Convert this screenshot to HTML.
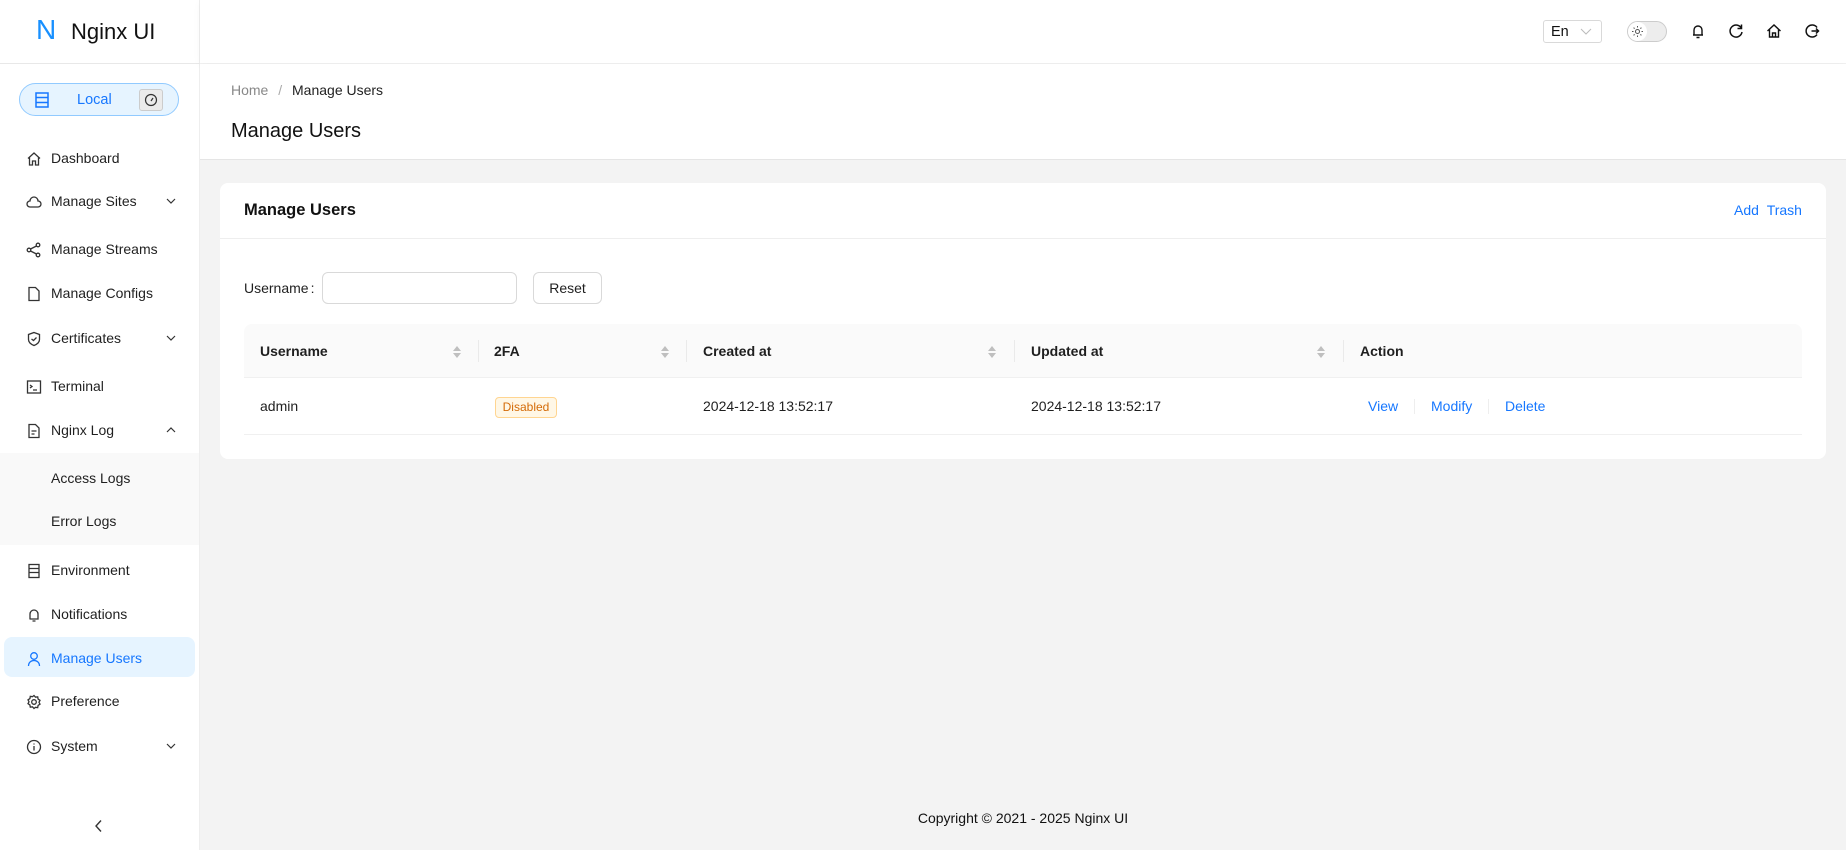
<!DOCTYPE html>
<html><head><meta charset="utf-8"><style>
*{box-sizing:border-box;margin:0;padding:0}
body{width:1846px;height:850px;overflow:hidden;background:#f3f3f3;font-family:"Liberation Sans",sans-serif;color:rgba(0,0,0,.88);font-size:14px;position:relative}
.a{position:absolute}
.side{left:0;top:0;width:200px;height:850px;background:#fff;border-right:1px solid #eee}
.mi{position:absolute;left:0;width:200px;height:40px;line-height:42px;font-size:14px}
.mi svg{position:absolute;left:26px;top:14px}
.mi span{position:absolute;left:51px;top:0;white-space:nowrap}
.blue{color:#1677ff}
.th{position:absolute;top:324px;height:54px;line-height:55px;font-weight:bold;font-size:14px}
.sep{position:absolute;top:340px;width:1px;height:22px;background:#eaeaea}
.sort{position:absolute;top:345px}
.td{position:absolute;top:378px;height:56px;line-height:57px;font-size:14px}
</style></head><body>
<div class="a side">
  <div class="a" style="left:0;top:63px;width:200px;height:1px;background:#e8e8e8"></div>
  <div class="a" style="left:36px;top:14px;font-size:28px;color:#1890ff;font-weight:300">N</div>
  <div class="a" style="left:71px;top:19px;font-size:22px;color:#111">Nginx UI</div>
  <div class="a" style="left:19px;top:83px;width:160px;height:33px;border:1px solid #91caff;border-radius:17px;background:#e6f4ff"></div>
  <svg class="a" style="left:35px;top:92px" width="14" height="16" viewBox="0 0 14 16" fill="none" stroke="#1677ff" stroke-width="1.5"><rect x="1" y="1" width="12" height="14"/><path d="M1 5.5h12M1 10.5h12"/></svg>
  <div class="a blue" style="left:77px;top:92px;font-size:14.5px">Local</div>
  <div class="a" style="left:139px;top:89px;width:24px;height:22px;border:1px solid #ccc;border-radius:3px;background:#ebebeb"></div>
  <svg class="a" style="left:144px;top:93px" width="14" height="14" viewBox="0 0 14 14" fill="none" stroke="#333" stroke-width="1.2"><circle cx="7" cy="7" r="5.5"/><path d="M7 8l2-3"/></svg>

  <div class="mi" style="top:137px"><svg width="16" height="16" viewBox="0 0 16 16" fill="none" stroke="#333" stroke-width="1.3"><path d="M2 7.5L8 2l6 5.5M3.5 6v8h3v-4h3v4h3V6"/></svg><span>Dashboard</span></div>
  <div class="mi" style="top:180px"><svg width="16" height="16" viewBox="0 0 16 16" fill="none" stroke="#333" stroke-width="1.3"><path d="M4 13h8a3 3 0 0 0 0-6 4 4 0 0 0-8 0 3 3 0 0 0 0 6z"/></svg><span>Manage Sites</span><svg style="left:166px;top:17px" width="10" height="8" viewBox="0 0 10 8" fill="none" stroke="#333" stroke-width="1.2"><path d="M1 2l4 4 4-4"/></svg></div>
  <div class="mi" style="top:228px"><svg width="16" height="16" viewBox="0 0 16 16" fill="none" stroke="#333" stroke-width="1.3"><circle cx="3" cy="8" r="1.8"/><circle cx="12" cy="3" r="1.8"/><circle cx="12" cy="13" r="1.8"/><path d="M4.5 7l6-3M4.5 9l6 3"/></svg><span>Manage Streams</span></div>
  <div class="mi" style="top:272px"><svg width="16" height="16" viewBox="0 0 16 16" fill="none" stroke="#333" stroke-width="1.3"><path d="M3 1.5h6.5l3.5 3.5v9.5H3z"/></svg><span>Manage Configs</span></div>
  <div class="mi" style="top:317px"><svg width="16" height="16" viewBox="0 0 16 16" fill="none" stroke="#333" stroke-width="1.3"><path d="M8 1.5l5.5 2v5c0 3-3 5-5.5 6-2.5-1-5.5-3-5.5-6v-5z"/><path d="M5.5 8l2 1.5 3-3"/></svg><span>Certificates</span><svg style="left:166px;top:17px" width="10" height="8" viewBox="0 0 10 8" fill="none" stroke="#333" stroke-width="1.2"><path d="M1 2l4 4 4-4"/></svg></div>
  <div class="mi" style="top:365px"><svg width="16" height="16" viewBox="0 0 16 16" fill="none" stroke="#333" stroke-width="1.3"><rect x="1.5" y="2" width="13" height="12"/><path d="M4 6l2 1.5L4 9M7 11h4"/></svg><span>Terminal</span></div>
  <div class="mi" style="top:409px"><svg width="16" height="16" viewBox="0 0 16 16" fill="none" stroke="#333" stroke-width="1.3"><path d="M3 1.5h6.5l3.5 3.5v9.5H3z"/><path d="M5.5 8h5M5.5 11h3"/></svg><span>Nginx Log</span><svg style="left:166px;top:17px" width="10" height="8" viewBox="0 0 10 8" fill="none" stroke="#333" stroke-width="1.2"><path d="M1 6l4-4 4 4"/></svg></div>
  <div class="a" style="left:0;top:453px;width:199px;height:92px;background:#f9f9f9"></div>
  <div class="mi" style="top:457px"><span>Access Logs</span></div>
  <div class="mi" style="top:500px"><span>Error Logs</span></div>
  <div class="mi" style="top:549px"><svg width="16" height="16" viewBox="0 0 16 16" fill="none" stroke="#333" stroke-width="1.3"><rect x="3" y="1.5" width="10" height="13"/><path d="M3 5.5h10M3 9.5h10"/></svg><span>Environment</span></div>
  <div class="mi" style="top:593px"><svg width="16" height="16" viewBox="0 0 16 16" fill="none" stroke="#333" stroke-width="1.3"><path d="M4 12V7a4 4 0 0 1 8 0v5H3.5h9M6.5 14h3"/></svg><span>Notifications</span></div>
  <div class="a" style="left:4px;top:637px;width:191px;height:40px;background:#e6f4ff;border-radius:8px"></div>
  <div class="mi blue" style="top:637px"><svg width="16" height="16" viewBox="0 0 16 16" fill="none" stroke="#1677ff" stroke-width="1.3"><circle cx="8" cy="5" r="3.3"/><path d="M2.5 15c0-3.5 2.5-5.5 5.5-5.5s5.5 2 5.5 5.5"/></svg><span>Manage Users</span></div>
  <div class="mi" style="top:680px"><svg width="16" height="16" viewBox="0 0 16 16" fill="none" stroke="#333" stroke-width="1.3"><circle cx="8" cy="8" r="2.3"/><path d="M8 1.5l1.5 1.7 2.2-.3.4 2.2 1.9 1.2-1 2 1 1.9-1.9 1.2-.4 2.2-2.2-.3L8 14.5l-1.5-1.7-2.2.3-.4-2.2-1.9-1.2 1-1.9-1-2 1.9-1.2.4-2.2 2.2.3z"/></svg><span>Preference</span></div>
  <div class="mi" style="top:725px"><svg width="16" height="16" viewBox="0 0 16 16" fill="none" stroke="#333" stroke-width="1.3"><circle cx="8" cy="8" r="6.5"/><path d="M8 7v4.5M8 4.5v1"/></svg><span>System</span><svg style="left:166px;top:17px" width="10" height="8" viewBox="0 0 10 8" fill="none" stroke="#333" stroke-width="1.2"><path d="M1 2l4 4 4-4"/></svg></div>
  <svg class="a" style="left:93px;top:819px" width="12" height="14" viewBox="0 0 12 14" fill="none" stroke="#333" stroke-width="1.4"><path d="M8 1.5L3 7l5 5.5"/></svg>
</div>

<div class="a" style="left:200px;top:0;width:1646px;height:63px;background:#fff;box-shadow:0 2px 8px rgba(0,0,0,.04)"></div>
<div class="a" style="left:1543px;top:20px;width:59px;height:23px;border:1px solid #d9d9d9;border-radius:3px;background:#fff"></div>
<div class="a" style="left:1551px;top:23px;font-size:14.5px;line-height:18px;color:#111">En</div>
<svg class="a" style="left:1580px;top:26px" width="12" height="10" viewBox="0 0 12 10" fill="none" stroke="#bbb" stroke-width="1"><path d="M1 3l5 5 5-5"/></svg>
<div class="a" style="left:1627px;top:21px;width:40px;height:21px;border:1px solid #ccc;border-radius:11px;background:#ededed"></div>
<div class="a" style="left:1628px;top:22px;width:19px;height:19px;border-radius:50%;background:#fff"></div>
<svg class="a" style="left:1631px;top:25px" width="13" height="13" viewBox="0 0 13 13" fill="none" stroke="#555" stroke-width="1"><circle cx="6.5" cy="6.5" r="2"/><path d="M6.5 1v1.5M6.5 10.5V12M1 6.5h1.5M10.5 6.5H12M2.6 2.6l1 1M9.4 9.4l1 1M2.6 10.4l1-1M9.4 3.6l1-1"/></svg>
<svg class="a" style="left:1690px;top:23px" width="16" height="16" viewBox="0 0 16 16" fill="none" stroke="#111" stroke-width="1.4"><path d="M4 12V7a4 4 0 0 1 8 0v5H3h10M6.5 14.5h3"/></svg>
<svg class="a" style="left:1728px;top:23px" width="16" height="16" viewBox="0 0 16 16" fill="none" stroke="#111" stroke-width="1.5"><path d="M13.5 5.5A6 6 0 1 0 14 9M13.5 1.5v4h-4"/></svg>
<svg class="a" style="left:1766px;top:23px" width="16" height="16" viewBox="0 0 16 16" fill="none" stroke="#111" stroke-width="1.4"><path d="M1.5 8L8 2l6.5 6M3.5 6.5v7.5h9V6.5M6.5 14v-4h3v4"/></svg>
<svg class="a" style="left:1804px;top:23px" width="16" height="16" viewBox="0 0 16 16" fill="none" stroke="#111" stroke-width="1.5"><path d="M13 4.5A6 6 0 1 0 13 11.5M7.5 8h7M12 5.5L14.5 8 12 10.5"/></svg>

<div class="a" style="left:200px;top:64px;width:1646px;height:96px;background:#fff;border-bottom:1px solid #e5e5e5"></div>
<div class="a" style="left:231px;top:82px;font-size:14px;color:#888">Home <span style="margin:0 6px;color:#aaa">/</span> <span style="color:#222">Manage Users</span></div>
<div class="a" style="left:231px;top:120px;font-size:20px;color:#111">Manage Users</div>

<div class="a" style="left:220px;top:183px;width:1606px;height:276px;background:#fff;border-radius:8px"></div>
<div class="a" style="left:220px;top:238px;width:1606px;height:1px;background:#eee"></div>
<div class="a" style="left:244px;top:201px;font-size:16.5px;font-weight:bold;color:#111">Manage Users</div>
<div class="a blue" style="left:1734px;top:202px;font-size:14px">Add&nbsp;&nbsp;Trash</div>

<div class="a" style="left:244px;top:280px;font-size:14px">Username<span style="margin-left:2px">:</span></div>
<div class="a" style="left:322px;top:272px;width:195px;height:32px;border:1px solid #d9d9d9;border-radius:6px"></div>
<div class="a" style="left:533px;top:272px;width:69px;height:32px;border:1px solid #d9d9d9;border-radius:6px;text-align:center;line-height:30px;font-size:14px">Reset</div>

<div class="a" style="left:244px;top:324px;width:1558px;height:54px;background:#fafafa;border-radius:8px 8px 0 0;border-bottom:1px solid #f0f0f0"></div>
<div class="th" style="left:260px">Username</div>
<div class="th" style="left:494px">2FA</div>
<div class="th" style="left:703px">Created at</div>
<div class="th" style="left:1031px">Updated at</div>
<div class="th" style="left:1360px">Action</div>
<div class="sep" style="left:478px"></div><div class="sep" style="left:686px"></div><div class="sep" style="left:1014px"></div><div class="sep" style="left:1343px"></div>
<svg class="sort" style="left:452px" width="10" height="14" viewBox="0 0 10 14" fill="#bfbfbf"><path d="M5 1l4 5H1zM5 13L1 8h8z"/></svg>
<svg class="sort" style="left:660px" width="10" height="14" viewBox="0 0 10 14" fill="#bfbfbf"><path d="M5 1l4 5H1zM5 13L1 8h8z"/></svg>
<svg class="sort" style="left:987px" width="10" height="14" viewBox="0 0 10 14" fill="#bfbfbf"><path d="M5 1l4 5H1zM5 13L1 8h8z"/></svg>
<svg class="sort" style="left:1316px" width="10" height="14" viewBox="0 0 10 14" fill="#bfbfbf"><path d="M5 1l4 5H1zM5 13L1 8h8z"/></svg>

<div class="a" style="left:244px;top:434px;width:1558px;height:1px;background:#f0f0f0"></div>
<div class="td" style="left:260px">admin</div>
<div class="a" style="left:495px;top:397px;width:62px;height:21px;border:1px solid #ffd591;background:#fff7e6;color:#d46b08;border-radius:4px;font-size:12px;line-height:19px;text-align:center">Disabled</div>
<div class="td" style="left:703px">2024-12-18 13:52:17</div>
<div class="td" style="left:1031px">2024-12-18 13:52:17</div>
<div class="td blue" style="left:1368px">View</div>
<div class="a" style="left:1414px;top:399px;width:1px;height:15px;background:#eee"></div>
<div class="td blue" style="left:1431px">Modify</div>
<div class="a" style="left:1488px;top:399px;width:1px;height:15px;background:#eee"></div>
<div class="td blue" style="left:1505px">Delete</div>

<div class="a" style="left:200px;top:810px;width:1646px;text-align:center;font-size:14px;color:#111">Copyright © 2021 - 2025 Nginx UI</div>
</body></html>
